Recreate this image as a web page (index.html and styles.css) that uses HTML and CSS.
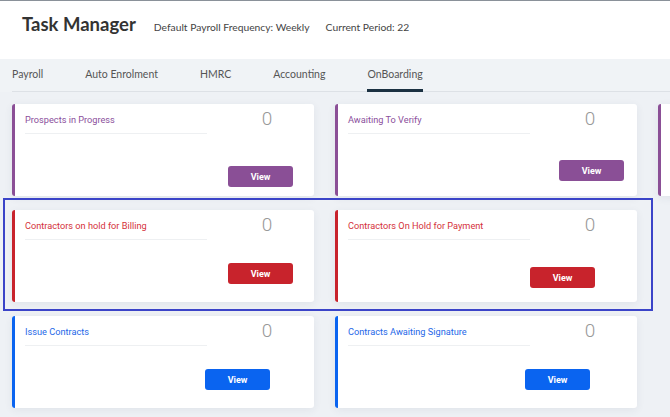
FILE: index.html
```html
<!DOCTYPE html>
<html>
<head>
<meta charset="utf-8">
<link rel="stylesheet" href="styles.css">
</head>
<body>
<header class="header">
  <h1 class="title">Task Manager</h1>
  <span class="meta">Default Payroll Frequency: Weekly</span>
  <span class="meta">Current Period: 22</span>
</header>
<nav class="tabbar">
  <div class="tabs">
    <span class="tab">Payroll</span>
    <span class="tab">Auto Enrolment</span>
    <span class="tab">HMRC</span>
    <span class="tab">Accounting</span>
    <span class="tab active">OnBoarding</span>
  </div>
</nav>
<main class="main">
  <div class="grid">
    <div class="card purple">
      <div class="card-head"><div class="card-title">Prospects in Progress</div><div class="count">0</div></div>
      <button class="btn pos-a">View</button>
    </div>
    <div class="card purple">
      <div class="card-head"><div class="card-title">Awaiting To Verify</div><div class="count">0</div></div>
      <button class="btn pos-b">View</button>
    </div>
    <div class="card purple"></div>

    <div class="card red">
      <div class="card-head"><div class="card-title">Contractors on hold for Billing</div><div class="count">0</div></div>
      <button class="btn pos-c">View</button>
    </div>
    <div class="card red">
      <div class="card-head"><div class="card-title">Contractors On Hold for Payment</div><div class="count">0</div></div>
      <button class="btn pos-d">View</button>
    </div>
    <div class="empty"></div>

    <div class="card blue">
      <div class="card-head"><div class="card-title">Issue Contracts</div><div class="count">0</div></div>
      <button class="btn pos-e">View</button>
    </div>
    <div class="card blue">
      <div class="card-head"><div class="card-title">Contracts Awaiting Signature</div><div class="count">0</div></div>
      <button class="btn pos-f">View</button>
    </div>
    <div class="empty"></div>
  </div>
  <div class="highlight"></div>
</main>
</body>
</html>
```
FILE: styles.css
```css
* { box-sizing: border-box; }
html, body { margin: 0; padding: 0; }
body {
  width: 670px;
  height: 417px;
  overflow: hidden;
  background: #eef1f5;
  font-family: "Lato", "Open Sans", sans-serif;
}
.header {
  height: 59px;
  background: #fff;
  border-top: 1px solid #8a9199;
  display: flex;
  align-items: baseline;
  padding: 12px 0 0 22px;
}
.title {
  margin: 0;
  font-size: 18.5px;
  font-weight: 700;
  color: #333;
  margin-right: 18px;
}
.meta {
  font-size: 10.3px;
  color: #444;
  margin-right: 16px;
}
.tabbar {
  height: 33px;
  background: #f0f3f6;
  padding-left: 12px;
}
.tabs {
  display: flex;
  gap: 42px;
  height: 33px;
  border-bottom: 1px solid #dde1e6;
}
.tab {
  height: 33px;
  margin-bottom: -1px;
  padding-top: 8px;
  font-size: 10.5px;
  line-height: 15px;
  color: #555;
}
.tab.active {
  border-bottom: 3px solid #1b3142;
}
.main {
  position: relative;
  height: 325px;
  overflow: hidden;
  padding: 12px 0 0 12px;
}
.grid {
  display: grid;
  grid-template-columns: 302px 302px 302px;
  grid-auto-rows: 92px;
  column-gap: 21px;
  row-gap: 14px;
}
.card {
  background: #fff;
  border-radius: 3px;
  border-left: 3px solid;
  box-shadow: 0 2px 8px rgba(40, 60, 90, 0.07);
  padding-left: 10px;
  font-family: "Roboto", "Noto Sans", sans-serif;
}
.card.purple { border-left-color: #8b4f96; }
.card.red { border-left-color: #c8232c; }
.card.blue { border-left-color: #0a64f0; }
.card.purple .card-title { color: #8b4f9c; }
.card.red .card-title { color: #d4313a; }
.card.blue .card-title { color: #2467e8; }
.card.purple .btn { background: #8a4f96; }
.card.red .btn { background: #c8232c; }
.card.blue .btn { background: #0a64f0; }
.card-head {
  display: flex;
  align-items: flex-start;
  height: 30px;
}
.card-title {
  width: 182px;
  padding-top: 9px;
  padding-bottom: 6px;
  font-size: 9.2px;
  line-height: 14px;
  border-bottom: 1px solid #eef0f2;
}
.count {
  width: 24px;
  margin-left: 48px;
  padding-top: 5px;
  text-align: center;
  font-size: 19px;
  line-height: 20px;
  font-weight: 300;
  color: #999;
}
.btn {
  display: block;
  width: 65px;
  height: 21px;
  border: 0;
  border-radius: 3px;
  color: #fff;
  font-family: "Roboto", sans-serif;
  font-weight: 700;
  font-size: 9px;
  padding: 0;
}
.pos-a { margin: 32px 0 0 203px; }
.pos-b { margin: 26px 0 0 211px; }
.pos-c { margin: 23px 0 0 203px; }
.pos-d { margin: 27px 0 0 182px; }
.pos-e { margin: 23px 0 0 180px; }
.pos-f { margin: 23px 0 0 177px; }
.highlight {
  position: absolute;
  left: 3px;
  top: 106px;
  width: 650px;
  height: 113px;
  border: 2px solid #3b44c8;
  pointer-events: none;
}
```
